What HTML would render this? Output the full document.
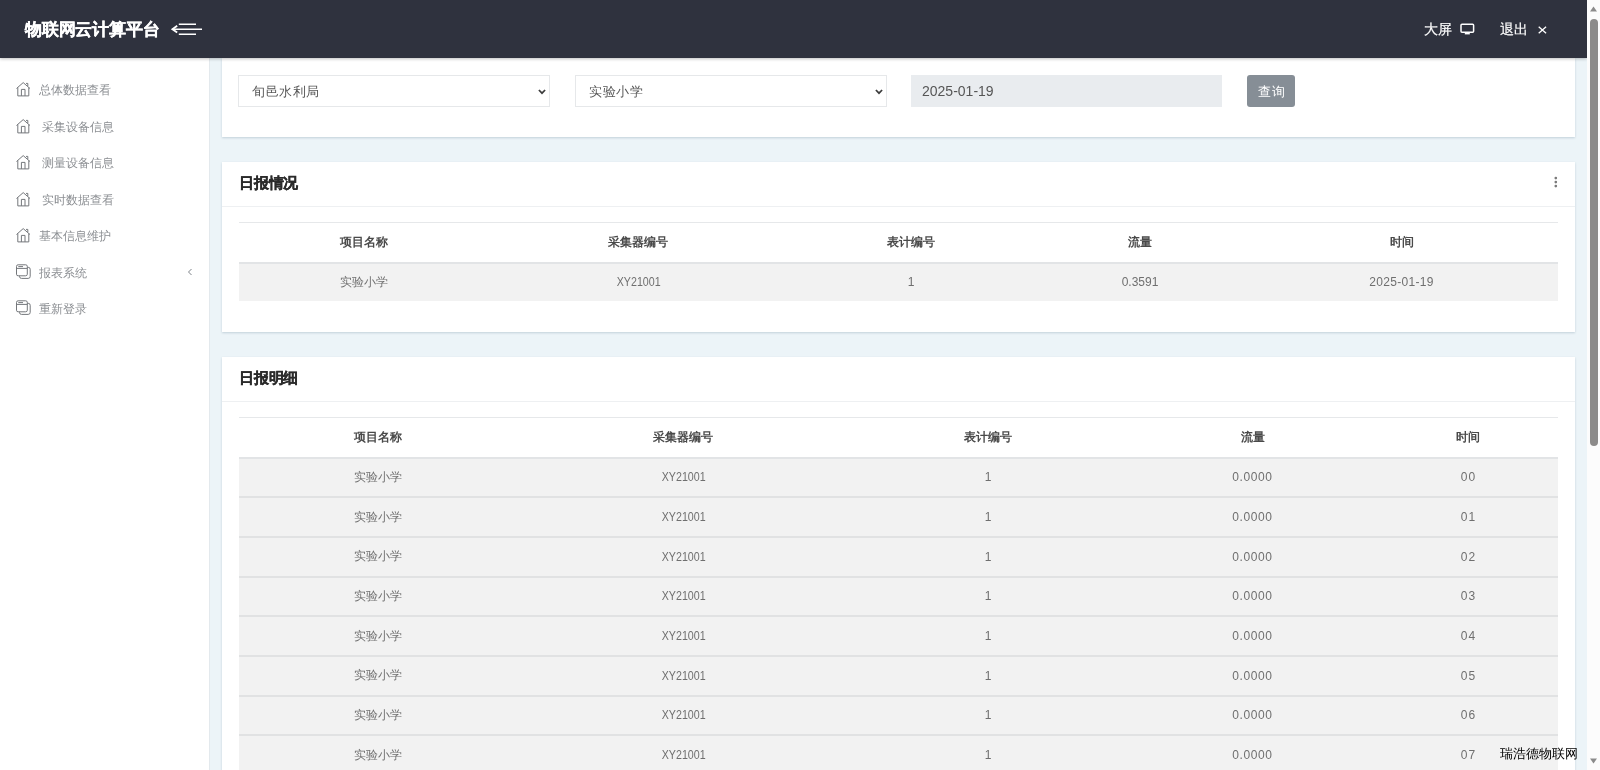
<!DOCTYPE html>
<html>
<head>
<meta charset="utf-8">
<title>物联网云计算平台</title>
<style>
*{box-sizing:border-box;margin:0;padding:0}
html,body{width:1600px;height:770px;overflow:hidden}
body{font-family:"Liberation Sans",sans-serif;background:#ecf4f8;color:#797979;font-size:12px;position:relative}
.abs{position:absolute}
#hdr .title,#hdr .r,#side .it,.card h3,.sel,.inp,.btn,table,#foot{will-change:transform}
/* header */
#hdr{position:absolute;left:0;top:0;width:1587px;height:58px;background:#2f323e;z-index:10;box-shadow:0 1px 3px rgba(0,0,0,.25)}
#hdr .title{position:absolute;left:25px;top:1px;height:58px;line-height:58px;color:#fff;font-weight:bold;font-size:17px;letter-spacing:-0.2px;white-space:nowrap;-webkit-text-stroke:0.3px #fff}
#hdr .r{position:absolute;top:1px;height:58px;line-height:57px;color:#fff;font-size:14px;white-space:nowrap;-webkit-text-stroke:0.2px #fff}
/* sidebar */
#side{position:absolute;left:0;top:58px;width:210px;height:712px;background:#fff;border-right:1px solid #e3e9ed;z-index:5}
#side .it{position:absolute;left:0;width:209px;height:20px;line-height:20px;font-size:12px;color:#8c8f93;white-space:nowrap}
#side .it svg{position:absolute;left:16px;top:0.7px}
#side .it svg.ly{top:2px}
#side .it span{position:absolute;left:39px;top:0.5px}
#side .it span.sp{left:41.6px}
/* cards */
.card{position:absolute;left:222px;width:1353px;background:#fff;box-shadow:0 1px 2px rgba(190,205,215,.9)}
.card h3{position:absolute;left:17px;top:11px;font-size:15px;letter-spacing:-0.25px;line-height:20px;font-weight:bold;color:#2b2b2b;-webkit-text-stroke:0.3px #2b2b2b}
.card .hr{position:absolute;left:0;width:100%;height:1px;background:#eef0f2}
.sel{position:absolute;top:17px;width:312px;height:32px;border:1px solid #e6e8ea;border-radius:0;background:#fff;font-size:13px;letter-spacing:0.6px;line-height:32px;color:#565656;padding-left:13px}
.sel svg{position:absolute;right:2.5px;top:11.5px}
.inp{position:absolute;top:17px;left:689px;width:311px;height:32px;background:#e9ecef;border-radius:0;font-size:14px;line-height:32px;color:#565656;padding-left:11px}
.btn{position:absolute;top:17px;left:1025px;width:48px;height:32px;background:#868e96;border-radius:3px;color:#fff;font-size:13px;letter-spacing:1px;padding-left:1px;line-height:33px;text-align:center}
/* tables */
table{position:absolute;left:17px;width:1319px;border-collapse:collapse;table-layout:fixed;font-size:12px}
th{height:40px;border-top:1px solid #e6e8ea;border-bottom:2px solid #e2e4e6;color:#4a4a4a;font-weight:bold;font-size:12px;text-align:center;vertical-align:middle}
tr.r{height:39.7px}
td{text-align:center;vertical-align:middle;color:#6f6f6f;background:#f2f2f2;border-top:2px solid #e1e2e3;font-size:12px}
.x span{display:inline-block;transform:scaleX(.89);font-size:12px;position:relative;left:1px}
.t{letter-spacing:1.2px;text-indent:1px}
.z{letter-spacing:0.6px}
.d{letter-spacing:0.3px}
/* scrollbar */
#sb{position:absolute;left:1587px;top:0;width:13px;height:770px;background:#fcfcfc;z-index:20}
#sb .thumb{position:absolute;left:3.1px;top:19px;width:7.6px;height:427px;border-radius:4px;background:#8c8b8a}
#foot{position:absolute;left:1500px;top:744.5px;font-size:13px;line-height:18px;color:#000;z-index:15;white-space:nowrap}
</style>
</head>
<body>

<div id="hdr">
  <div class="title">物联网云计算平台</div>
  <svg class="abs" style="left:170px;top:20px" width="34" height="18" viewBox="0 0 34 18" fill="none" stroke="#fff" stroke-width="1.6">
    <path d="M2.6 9.2H32M8.8 4.2H26M8.8 14.3H26"/><path d="M7.2 5.8L2.4 9.2l4.8 3.4" stroke-width="1.8"/>
  </svg>
  <div class="r" style="left:1424px">大屏</div>
  <svg class="abs" style="left:1460px;top:23px" width="15" height="12" viewBox="0 0 15 12" fill="none" stroke="#fff" stroke-width="1.5">
    <rect x="1" y="1.2" width="12.6" height="8" rx="1"/><path d="M4.8 10.6h5" stroke-width="1.6"/>
  </svg>
  <div class="r" style="left:1500px">退出</div>
  <svg class="abs" style="left:1537px;top:25px" width="11" height="10" viewBox="0 0 11 10" fill="none" stroke="#fff" stroke-width="1.3">
    <path d="M1.7 1.7l7.4 6.6M9.1 1.7l-7.4 6.6"/>
  </svg>
</div>

<div id="side">
  <div class="it" style="top:21px"><svg width="15" height="17" viewBox="0 0 15 17" fill="none" stroke="#74777b" stroke-width="1"><path d="M0.5 8.5L7.2 2.6l6.8 5.9M1.8 7.5V15.9H12.8V7.5M5.4 15.9V9.4H9V15.9M10 3.4H11.8V6.2"/></svg><span>总体数据查看</span></div>
  <div class="it" style="top:58px"><svg width="15" height="17" viewBox="0 0 15 17" fill="none" stroke="#74777b" stroke-width="1"><path d="M0.5 8.5L7.2 2.6l6.8 5.9M1.8 7.5V15.9H12.8V7.5M5.4 15.9V9.4H9V15.9M10 3.4H11.8V6.2"/></svg><span class="sp">采集设备信息</span></div>
  <div class="it" style="top:94px"><svg width="15" height="17" viewBox="0 0 15 17" fill="none" stroke="#74777b" stroke-width="1"><path d="M0.5 8.5L7.2 2.6l6.8 5.9M1.8 7.5V15.9H12.8V7.5M5.4 15.9V9.4H9V15.9M10 3.4H11.8V6.2"/></svg><span class="sp">测量设备信息</span></div>
  <div class="it" style="top:131px"><svg width="15" height="17" viewBox="0 0 15 17" fill="none" stroke="#74777b" stroke-width="1"><path d="M0.5 8.5L7.2 2.6l6.8 5.9M1.8 7.5V15.9H12.8V7.5M5.4 15.9V9.4H9V15.9M10 3.4H11.8V6.2"/></svg><span class="sp">实时数据查看</span></div>
  <div class="it" style="top:167px"><svg width="15" height="17" viewBox="0 0 15 17" fill="none" stroke="#74777b" stroke-width="1"><path d="M0.5 8.5L7.2 2.6l6.8 5.9M1.8 7.5V15.9H12.8V7.5M5.4 15.9V9.4H9V15.9M10 3.4H11.8V6.2"/></svg><span>基本信息维护</span></div>
  <div class="it" style="top:204px"><svg class="ly" width="16" height="16" viewBox="0 0 16 16" fill="none" stroke="#74777b" stroke-width="1"><rect x="0.5" y="0.8" width="10.8" height="11" rx="1.6"/><path d="M0.5 4.4H11.3M2.3 2.6H7M11.3 3.3H12.2a2 2 0 0 1 2 2V12.4a2 2 0 0 1-2 2H5.5a2 2 0 0 1-2-2V11.8"/></svg><span>报表系统</span>
    <svg style="left:187px;top:6px" width="6" height="8" viewBox="0 0 6 8" fill="none" stroke="#7d8288" stroke-width="1"><path d="M4.5 1L1.5 4l3 3"/></svg></div>
  <div class="it" style="top:240px"><svg class="ly" width="16" height="16" viewBox="0 0 16 16" fill="none" stroke="#74777b" stroke-width="1"><rect x="0.5" y="0.8" width="10.8" height="11" rx="1.6"/><path d="M0.5 4.4H11.3M2.3 2.6H7M11.3 3.3H12.2a2 2 0 0 1 2 2V12.4a2 2 0 0 1-2 2H5.5a2 2 0 0 1-2-2V11.8"/></svg><span>重新登录</span></div>
</div>

<!-- filter card -->
<div class="card" style="top:58px;height:79px">
  <div class="sel" style="left:16px">旬邑水利局<svg width="10" height="8" viewBox="0 0 10 8" fill="none" stroke="#3c3c3c" stroke-width="1.7"><path d="M1.9 2l3.1 3.2L8.1 2"/></svg></div>
  <div class="sel" style="left:353px">实验小学<svg width="10" height="8" viewBox="0 0 10 8" fill="none" stroke="#3c3c3c" stroke-width="1.7"><path d="M1.9 2l3.1 3.2L8.1 2"/></svg></div>
  <div class="inp">2025-01-19</div>
  <div class="btn">查询</div>
</div>

<!-- card 2 -->
<div class="card" style="top:162px;height:170px">
  <h3>日报情况</h3>
  <svg class="abs" style="left:1331px;top:14px" width="6" height="12" viewBox="0 0 6 12" fill="#7a7a7a"><circle cx="2.8" cy="2.1" r="1.35"/><circle cx="2.8" cy="6.1" r="1.35"/><circle cx="2.8" cy="10.1" r="1.35"/></svg>
  <div class="hr" style="top:44px"></div>
  <table style="top:60px">
    <colgroup><col style="width:250px"><col style="width:298px"><col style="width:248px"><col style="width:210px"><col style="width:313px"></colgroup>
    <tr><th>项目名称</th><th>采集器编号</th><th>表计编号</th><th>流量</th><th>时间</th></tr>
    <tr style="height:38px"><td>实验小学</td><td class="x"><span>XY21001</span></td><td>1</td><td>0.3591</td><td class="d">2025-01-19</td></tr>
  </table>
</div>

<!-- card 3 -->
<div class="card" style="top:357px;height:440px">
  <h3>日报明细</h3>
  <div class="hr" style="top:44px"></div>
  <table style="top:60px">
    <colgroup><col style="width:278px"><col style="width:332px"><col style="width:278px"><col style="width:251px"><col style="width:180px"></colgroup>
    <tr><th>项目名称</th><th>采集器编号</th><th>表计编号</th><th>流量</th><th>时间</th></tr>
    <tr class="r"><td>实验小学</td><td class="x"><span>XY21001</span></td><td>1</td><td class="z">0.0000</td><td class="t">00</td></tr>
    <tr class="r"><td>实验小学</td><td class="x"><span>XY21001</span></td><td>1</td><td class="z">0.0000</td><td class="t">01</td></tr>
    <tr class="r"><td>实验小学</td><td class="x"><span>XY21001</span></td><td>1</td><td class="z">0.0000</td><td class="t">02</td></tr>
    <tr class="r"><td>实验小学</td><td class="x"><span>XY21001</span></td><td>1</td><td class="z">0.0000</td><td class="t">03</td></tr>
    <tr class="r"><td>实验小学</td><td class="x"><span>XY21001</span></td><td>1</td><td class="z">0.0000</td><td class="t">04</td></tr>
    <tr class="r"><td>实验小学</td><td class="x"><span>XY21001</span></td><td>1</td><td class="z">0.0000</td><td class="t">05</td></tr>
    <tr class="r"><td>实验小学</td><td class="x"><span>XY21001</span></td><td>1</td><td class="z">0.0000</td><td class="t">06</td></tr>
    <tr class="r"><td>实验小学</td><td class="x"><span>XY21001</span></td><td>1</td><td class="z">0.0000</td><td class="t">07</td></tr>
    <tr class="r"><td>实验小学</td><td class="x"><span>XY21001</span></td><td>1</td><td class="z">0.0000</td><td class="t">08</td></tr>
  </table>
</div>

<div id="sb">
  <svg class="abs" style="left:3px;top:6px" width="7" height="6" viewBox="0 0 7 6" fill="#8b8b8b"><path d="M3.5 0.5L7 5.5H0z"/></svg>
  <div class="thumb"></div>
  <svg class="abs" style="left:3px;top:758px" width="7" height="6" viewBox="0 0 7 6" fill="#8b8b8b"><path d="M0 0.5H7L3.5 5.5z"/></svg>
</div>
<div id="foot">瑞浩德物联网</div>
</body>
</html>
